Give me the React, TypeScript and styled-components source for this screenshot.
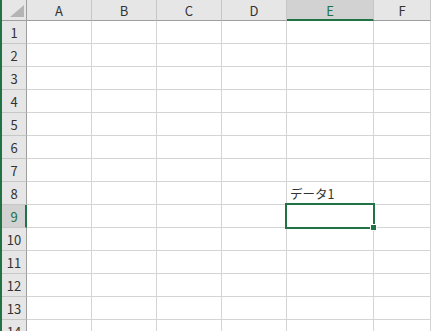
import React, { FC } from 'react';
import styled, { createGlobalStyle, css } from 'styled-components';

const green = '#217346';
const gridLine = '#d4d4d4';
const headerBg = '#e6e6e6';
const headerSelBg = '#d2d2d2';
const headerLine = '#c6c6c6';
const headerEdge = '#9e9e9e';

const columns = ['A', 'B', 'C', 'D', 'E', 'F'];
const rowCount = 14;
const selected = { col: 'E', row: 9 };
const data: Record<string, string> = { E8: 'データ1' };

const GlobalStyle = createGlobalStyle`
	html, body {
		margin: 0;
		padding: 0;
		background: #ffffff;
		overflow: hidden;
	}
	body {
		font-family: "Noto Sans CJK JP", "Noto Sans", sans-serif;
	}
`;

const App: FC = () => {
	return (
		<>
			<GlobalStyle />
			<Window>
				<Sheet>
					<Corner>
						<CornerMark viewBox="0 0 14 12">
							<polygon points="14,0 14,12 0,12" />
						</CornerMark>
					</Corner>
					{columns.map((c) => (
						<ColHeader key={c} $active={c === selected.col}>
							{c}
						</ColHeader>
					))}
					{Array.from({ length: rowCount }, (_, i) => i + 1).map((r) => (
						<React.Fragment key={r}>
							<RowHeader $active={r === selected.row}>{r}</RowHeader>
							{columns.map((c) => {
								const ref = `${c}${r}`;
								const isSel = c === selected.col && r === selected.row;
								return (
									<Cell key={ref} $selected={isSel}>
										{data[ref] && <CellText>{data[ref]}</CellText>}
										{isSel && (
											<Selection>
												<FillHandle />
											</Selection>
										)}
									</Cell>
								);
							})}
						</React.Fragment>
					))}
				</Sheet>
			</Window>
		</>
	);
};

export default App;

const Window = styled.div`
	height: 331px;
	overflow: hidden;
	border-left: 2px solid ${green};
	box-sizing: border-box;
`;

const Sheet = styled.div`
	display: grid;
	grid-template-columns: 25px 65px 65px 65px 65px 87px 1fr;
	grid-template-rows: 21px;
	grid-auto-rows: 23px;
`;

const headerBase = css`
	box-sizing: border-box;
	background: ${headerBg};
	color: #333333;
	font-size: 13px;
	display: flex;
	align-items: center;
	justify-content: center;
`;

const Corner = styled.div`
	${headerBase};
	position: relative;
	border-right: 1px solid ${headerEdge};
	border-bottom: 1px solid ${headerEdge};
`;

const CornerMark = styled.svg`
	position: absolute;
	right: 2px;
	bottom: 3px;
	width: 14px;
	height: 12px;
	fill: #b4b4b4;
`;

const ColHeader = styled.div<{ $active: boolean }>`
	${headerBase};
	border-right: 1px solid ${headerLine};
	border-bottom: ${(p) => (p.$active ? `2px solid ${green}` : `1px solid ${headerEdge}`)};
	background: ${(p) => (p.$active ? headerSelBg : headerBg)};
	color: ${(p) => (p.$active ? green : '#333333')};
	padding-top: ${(p) => (p.$active ? '1px' : '0')};
`;

const RowHeader = styled.div<{ $active: boolean }>`
	${headerBase};
	border-bottom: 1px solid ${headerLine};
	border-right: ${(p) => (p.$active ? `2px solid ${green}` : `1px solid ${headerEdge}`)};
	background: ${(p) => (p.$active ? headerSelBg : headerBg)};
	color: ${(p) => (p.$active ? green : '#333333')};
	padding-left: ${(p) => (p.$active ? '1px' : '0')};
`;

const Cell = styled.div<{ $selected: boolean }>`
	position: relative;
	z-index: ${(p) => (p.$selected ? 2 : 'auto')};
	box-sizing: border-box;
	border-right: 1px solid ${gridLine};
	border-bottom: 1px solid ${gridLine};
	display: flex;
	align-items: flex-end;
	padding: 0 2px 3px 3px;
	background: #ffffff;
`;

const CellText = styled.span`
	font-size: 12.5px;
	line-height: 14px;
	color: #333333;
	white-space: nowrap;
`;

const Selection = styled.div`
	position: absolute;
	top: -2px;
	left: -2px;
	right: -2px;
	bottom: -2px;
	border: 2px solid ${green};
	pointer-events: none;
`;

const FillHandle = styled.div`
	position: absolute;
	right: -4px;
	bottom: -4px;
	width: 5px;
	height: 5px;
	background: ${green};
	border: 1px solid #ffffff;
`;
